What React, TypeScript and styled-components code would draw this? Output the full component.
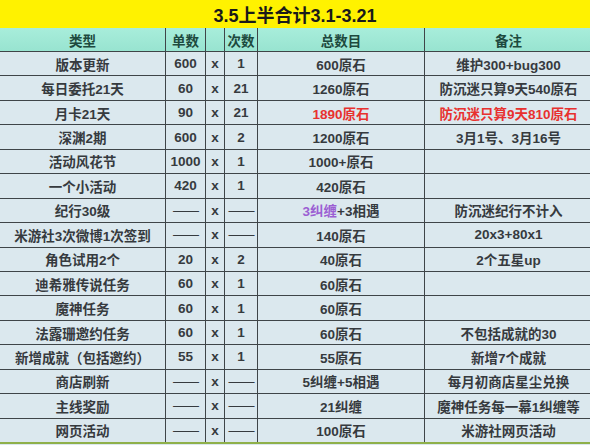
import styled, { createGlobalStyle } from "styled-components";

const GlobalStyle = createGlobalStyle`
  html, body {
    margin: 0;
    padding: 0;
    background: #dbe8ee;
  }
  body {
    font-family: "Liberation Sans", "Noto Sans CJK SC", sans-serif;
  }
`;

type Tone = "plain" | "red";

type Row = {
  name: string;
  unit: string;
  times: string;
  total: string;
  // part of the total that is coloured purple (纠缠 in 纪行)
  highlight?: string;
  note: string;
  tone?: Tone;
};

const DASH = "——";

const rows: Row[] = [
  { name: "版本更新", unit: "600", times: "1", total: "600原石", note: "维护300+bug300" },
  { name: "每日委托21天", unit: "60", times: "21", total: "1260原石", note: "防沉迷只算9天540原石" },
  { name: "月卡21天", unit: "90", times: "21", total: "1890原石", note: "防沉迷只算9天810原石", tone: "red" },
  { name: "深渊2期", unit: "600", times: "2", total: "1200原石", note: "3月1号、3月16号" },
  { name: "活动风花节", unit: "1000", times: "1", total: "1000+原石", note: "" },
  { name: "一个小活动", unit: "420", times: "1", total: "420原石", note: "" },
  { name: "纪行30级", unit: DASH, times: DASH, highlight: "3纠缠", total: "+3相遇", note: "防沉迷纪行不计入" },
  { name: "米游社3次微博1次签到", unit: DASH, times: DASH, total: "140原石", note: "20x3+80x1" },
  { name: "角色试用2个", unit: "20", times: "2", total: "40原石", note: "2个五星up" },
  { name: "迪希雅传说任务", unit: "60", times: "1", total: "60原石", note: "" },
  { name: "魔神任务", unit: "60", times: "1", total: "60原石", note: "" },
  { name: "法露珊邀约任务", unit: "60", times: "1", total: "60原石", note: "不包括成就的30" },
  { name: "新增成就（包括邀约）", unit: "55", times: "1", total: "55原石", note: "新增7个成就" },
  { name: "商店刷新", unit: DASH, times: DASH, total: "5纠缠+5相遇", note: "每月初商店星尘兑换" },
  { name: "主线奖励", unit: DASH, times: DASH, total: "21纠缠", note: "魔神任务每一幕1纠缠等" },
  { name: "网页活动", unit: DASH, times: DASH, total: "100原石", note: "米游社网页活动" },
];

export default function App() {
  return (
    <>
      <GlobalStyle />
      <Sheet>
        <Title>3.5上半合计3.1-3.21</Title>
        <Grid>
          <HeadCell>类型</HeadCell>
          <HeadCell>单数</HeadCell>
          <HeadCell />
          <HeadCell>次数</HeadCell>
          <HeadCell>总数目</HeadCell>
          <HeadCell>备注</HeadCell>
          {rows.map((r) => (
            <RowGroup key={r.name} r={r} />
          ))}
        </Grid>
        <BottomEdge />
      </Sheet>
    </>
  );
}

const RowGroup = ({ r }: { r: Row }) => (
  <>
    <Cell>{r.name}</Cell>
    <Cell $dash={r.unit === DASH}>{r.unit}</Cell>
    <Cell>x</Cell>
    <Cell $dash={r.times === DASH}>{r.times}</Cell>
    <Cell $tone={r.tone}>
      {r.highlight && <Purple>{r.highlight}</Purple>}
      {r.total}
    </Cell>
    <Cell $tone={r.tone}>{r.note}</Cell>
  </>
);

const Sheet = styled.div`
  width: 590px;
  height: 445px;
  display: flex;
  flex-direction: column;
  overflow: hidden;
  background: #dbe8ee;
`;

const Title = styled.div`
  height: 28px;
  flex: none;
  display: flex;
  align-items: center;
  justify-content: center;
  background: #fff200;
  color: #1a1a1a;
  font-size: 18px;
  font-weight: 700;
`;

const Grid = styled.div`
  flex: none;
  display: grid;
  grid-template-columns: 165px 39px 18px 32px 166px 167px;
  grid-template-rows: 23px;
  grid-auto-rows: 23.44px;
  gap: 1px;
  background: #3f4548;
`;

const HeadCell = styled.div`
  display: flex;
  align-items: center;
  justify-content: center;
  background: linear-gradient(#a8eddb, #98e4d0);
  color: #1d4a3e;
  font-size: 13.5px;
  font-weight: 700;
  white-space: nowrap;
`;

const Cell = styled.div<{ $tone?: Tone; $dash?: boolean }>`
  display: flex;
  align-items: center;
  justify-content: center;
  background: #dbe8ee;
  color: ${(p) => (p.$tone === "red" ? "#e8312f" : "#363a3e")};
  font-size: 13.5px;
  font-weight: ${(p) => (p.$dash ? 400 : 700)};
  letter-spacing: ${(p) => (p.$dash ? "-1px" : "0")};
  white-space: nowrap;
`;

const Purple = styled.span`
  color: #9b5fd3;
`;

const BottomEdge = styled.div`
  height: 2px;
  flex: none;
  background: #8fb04a;
`;
